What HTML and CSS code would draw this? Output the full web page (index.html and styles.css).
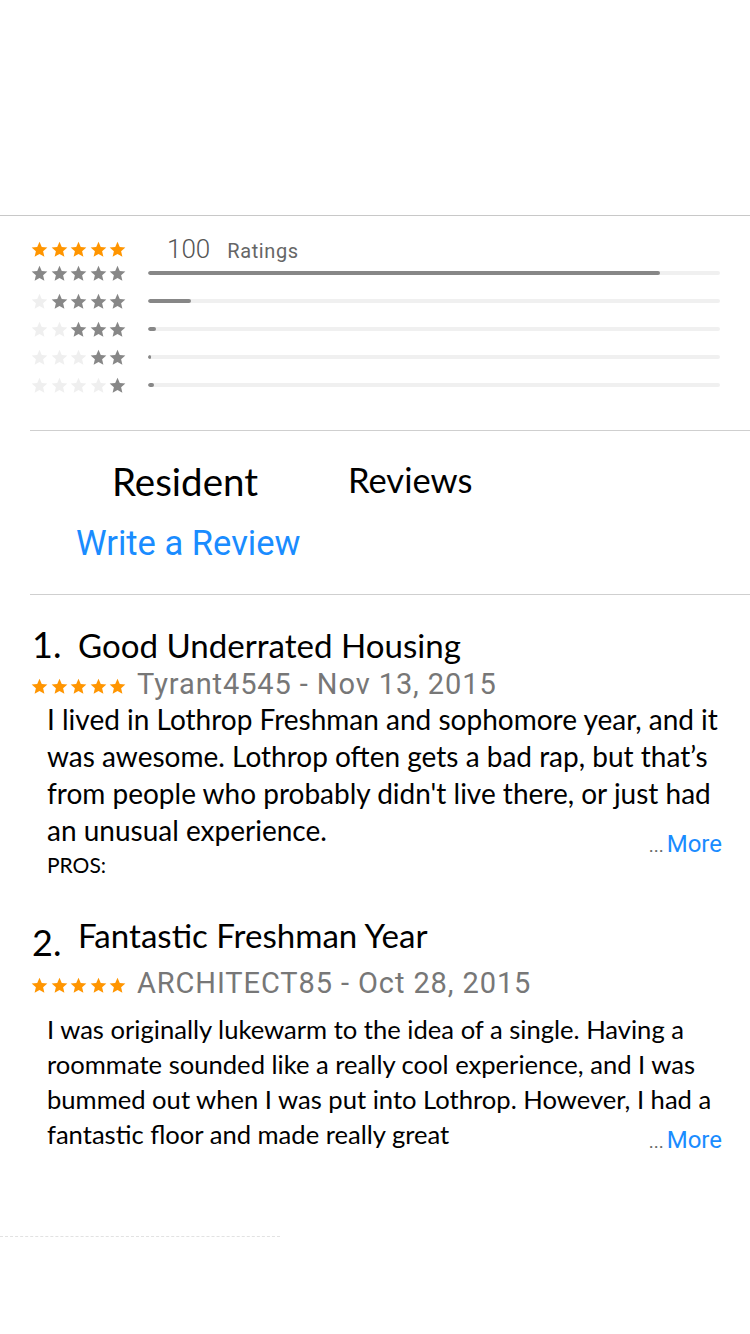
FILE: index.html
```html
<!DOCTYPE html>
<html lang="en">
<head>
<meta charset="utf-8">
<title>Resident Reviews</title>
<link rel="stylesheet" href="styles.css">
</head>
<body>
<svg class="defs" width="0" height="0" aria-hidden="true">
  <defs>
    <symbol id="star" viewBox="0 0 24 24">
      <path d="M12 1.2l3.2 7.3 7.9.7-6 5.3 1.8 7.8L12 18.2l-6.9 4.1 1.8-7.8-6-5.3 7.9-.7z"/>
    </symbol>
  </defs>
</svg>

<div class="top"></div>

<section class="ratings">
  <div class="rrow first">
    <div class="stars orange">
      <svg><use href="#star"/></svg><svg><use href="#star"/></svg><svg><use href="#star"/></svg><svg><use href="#star"/></svg><svg><use href="#star"/></svg>
    </div>
    <div class="count"><span class="num">100</span><span class="lbl">Ratings</span></div>
  </div>
  <div class="rrow">
    <div class="stars gray">
      <svg><use href="#star"/></svg><svg><use href="#star"/></svg><svg><use href="#star"/></svg><svg><use href="#star"/></svg><svg><use href="#star"/></svg>
    </div>
    <div class="bar"><div class="fill" style="width:89.5%"></div></div>
  </div>
  <div class="rrow">
    <div class="stars gray">
      <svg class="off"><use href="#star"/></svg><svg><use href="#star"/></svg><svg><use href="#star"/></svg><svg><use href="#star"/></svg><svg><use href="#star"/></svg>
    </div>
    <div class="bar"><div class="fill" style="width:7.5%"></div></div>
  </div>
  <div class="rrow">
    <div class="stars gray">
      <svg class="off"><use href="#star"/></svg><svg class="off"><use href="#star"/></svg><svg><use href="#star"/></svg><svg><use href="#star"/></svg><svg><use href="#star"/></svg>
    </div>
    <div class="bar"><div class="fill" style="width:1.4%"></div></div>
  </div>
  <div class="rrow">
    <div class="stars gray">
      <svg class="off"><use href="#star"/></svg><svg class="off"><use href="#star"/></svg><svg class="off"><use href="#star"/></svg><svg><use href="#star"/></svg><svg><use href="#star"/></svg>
    </div>
    <div class="bar"><div class="fill" style="width:0.5%"></div></div>
  </div>
  <div class="rrow">
    <div class="stars gray">
      <svg class="off"><use href="#star"/></svg><svg class="off"><use href="#star"/></svg><svg class="off"><use href="#star"/></svg><svg class="off"><use href="#star"/></svg><svg><use href="#star"/></svg>
    </div>
    <div class="bar"><div class="fill" style="width:1%"></div></div>
  </div>
</section>

<hr class="divider">

<section class="tabs">
  <div class="tab-titles">
    <span class="t-resident">Resident</span>
    <span class="t-reviews">Reviews</span>
  </div>
  <a class="write" href="#">Write a Review</a>
</section>

<hr class="divider">

<section class="reviews">
  <article class="review r1">
    <h2 class="rtitle"><span class="idx">1.</span><span class="ttl">Good Underrated Housing</span></h2>
    <div class="meta">
      <div class="stars orange small">
        <svg><use href="#star"/></svg><svg><use href="#star"/></svg><svg><use href="#star"/></svg><svg><use href="#star"/></svg><svg><use href="#star"/></svg>
      </div>
      <span class="who">Tyrant4545 - Nov 13, 2015</span>
    </div>
    <p class="body">I lived in Lothrop Freshman and sophomore year, and it<br>was awesome. Lothrop often gets a bad rap, but that’s<br>from people who probably didn't live there, or just had<br>an unusual experience.</p>
    <div class="foot">
      <span class="pros">PROS:</span>
      <a class="more" href="#"><span class="dots">...</span>More</a>
    </div>
  </article>

  <article class="review r2">
    <h2 class="rtitle"><span class="idx">2.</span><span class="ttl">Fantastic Freshman Year</span></h2>
    <div class="meta">
      <div class="stars orange small">
        <svg><use href="#star"/></svg><svg><use href="#star"/></svg><svg><use href="#star"/></svg><svg><use href="#star"/></svg><svg><use href="#star"/></svg>
      </div>
      <span class="who">ARCHITECT85 - Oct 28, 2015</span>
    </div>
    <div class="body-wrap">
      <p class="body">I was originally lukewarm to the idea of a single. Having a<br>roommate sounded like a really cool experience, and I was<br>bummed out when I was put into Lothrop. However, I had a<br>fantastic floor and made really great</p>
      <a class="more" href="#"><span class="dots">...</span>More</a>
    </div>
  </article>
</section>

<div class="bottom-rule"></div>
</body>
</html>
```

FILE: styles.css
```css
* { box-sizing: border-box; }

html, body {
  margin: 0;
  padding: 0;
  background: #fff;
}

body {
  width: 750px;
  font-family: Lato, "Open Sans", sans-serif;
  color: #000;
}

.defs { position: absolute; width: 0; height: 0; }

.top {
  height: 216px;
  border-bottom: 1px solid #c8c8c8;
}

/* ratings */
.ratings {
  padding: 23px 30px 0 31px;
  margin-bottom: 31px;
}

.rrow {
  display: flex;
  align-items: center;
  height: 28px;
}

.rrow.first { height: 20px; }

.stars {
  display: flex;
  gap: 2.5px;
  width: 117px;
  flex: none;
}

.stars svg {
  width: 17px;
  height: 17px;
  display: block;
}

.stars.orange svg { fill: #ff9500; }
.stars.gray svg { fill: #878787; }
.stars.gray svg.off { fill: #efefef; }

.count {
  display: flex;
  align-items: baseline;
  padding-left: 19px;
  font-family: Roboto, "Liberation Sans", sans-serif;
  color: #666;
}

.count .num {
  font-size: 26px;
  font-weight: 300;
  color: #555;
}

.count .lbl {
  font-size: 20px;
  letter-spacing: 0.6px;
  margin-left: 17px;
}

.bar {
  flex: 1;
  height: 4px;
  border-radius: 2px;
  background: #f0f0f0;
  overflow: hidden;
}

.bar .fill {
  height: 100%;
  background: #878787;
  border-radius: 2px;
  min-width: 3px;
}

.divider {
  margin: 0 0 0 30px;
  border: 0;
  border-top: 1px solid #cfcfcf;
  height: 0;
}

/* tabs */
.tabs {
  padding: 27px 0 31px 76px;
}

.tab-titles {
  display: flex;
  align-items: baseline;
  padding-left: 36px;
  height: 46px;
}

.t-resident {
  font-size: 38.5px;
  line-height: 46px;
}

.t-reviews {
  font-size: 34.5px;
  line-height: 46px;
  margin-left: 90px;
  position: relative;
  top: -3px;
}

.write {
  display: block;
  margin-top: 19px;
  font-family: Roboto, "Liberation Sans", sans-serif;
  font-size: 34.5px;
  line-height: 40px;
  color: #1a8cff;
  text-decoration: none;
}

/* reviews */
.reviews {
  padding: 29px 28px 0 31px;
}

.rtitle {
  margin: 0;
  font-weight: 400;
  display: flex;
  align-items: baseline;
  height: 40px;
  line-height: 40px;
}

.rtitle .idx {
  font-size: 36px;
  width: 47px;
  flex: none;
  padding-left: 1px;
}

.rtitle .ttl {
  font-size: 33.1px;
}

.meta {
  display: flex;
  align-items: center;
  height: 34px;
  margin-top: 3px;
}

.stars.small {
  width: 106px;
  gap: 2.5px;
  margin-top: 4px;
}

.stars.small svg { width: 17px; height: 17px; }

.who {
  font-family: Roboto, "Liberation Sans", sans-serif;
  font-size: 29px;
  line-height: 34px;
  letter-spacing: 0.9px;
  color: #777;
}

.body {
  margin: 0;
  padding-left: 16px;
  font-size: 28px;
  line-height: 37px;
}

.foot {
  display: flex;
  justify-content: space-between;
  align-items: flex-start;
  padding-left: 16px;
}

.pros {
  font-size: 21px;
  line-height: 24px;
  margin-top: 4px;
}

.more {
  font-family: Roboto, "Liberation Sans", sans-serif;
  font-size: 24px;
  line-height: 28px;
  color: #1a8cff;
  text-decoration: none;
  margin-top: -19px;
}

.more .dots {
  color: #666;
  font-size: 19px;
  margin-right: 3px;
}

.r2 { margin-top: 37px; }

.r2 .idx {
  position: relative;
  top: 8px;
}

.r2 .meta { margin-top: 12px; }

.r2 .body-wrap {
  position: relative;
  margin-top: 12px;
}

.r2 .body {
  font-size: 25.6px;
  line-height: 35px;
}

.r2 .more {
  position: absolute;
  right: 0;
  bottom: -4px;
  margin: 0;
}

.bottom-rule {
  margin-top: 84px;
  border-top: 1px dashed #e2e2e2;
  width: 280px;
}
```
